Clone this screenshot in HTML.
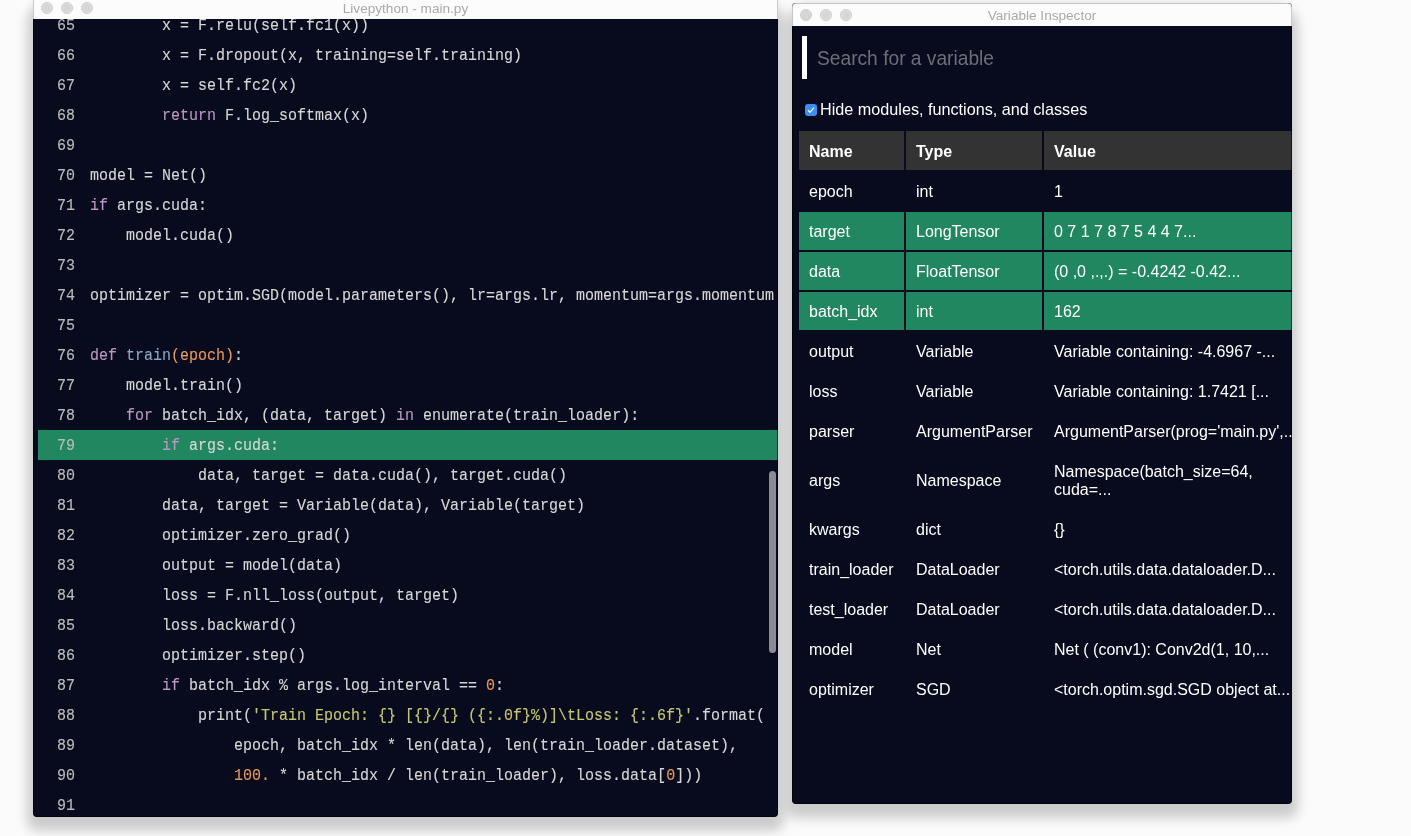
<!DOCTYPE html>
<html><head><meta charset="utf-8">
<style>
*{margin:0;padding:0;box-sizing:border-box}
html,body{width:1411px;height:836px;overflow:hidden;background:#fafbfa;position:relative}
body{font-family:"Liberation Sans",sans-serif}
.win{position:absolute;border-radius:4px;overflow:hidden;background:#080a1e}
.shd{position:absolute;border-radius:16px 16px 4px 4px;box-shadow:0 8px 12px 6px rgba(0,0,0,0.19)}
#eds{left:33px;top:-1px;width:745px;height:818px;z-index:2}
#vis{left:792px;top:3px;width:500px;height:801px;z-index:1}
.win::after{content:"";position:absolute;left:0;top:0;right:0;bottom:0;border-radius:4px;box-shadow:inset 0 0 0 1px rgba(0,0,0,0.55);pointer-events:none;z-index:5}
.win .tb::after{content:"";position:absolute;left:0;top:0;right:0;bottom:0;border-radius:4px 4px 0 0;box-shadow:inset 0 1px 0 rgba(0,0,0,0.22),inset 1px 0 0 rgba(0,0,0,0.2),inset -1px 0 0 rgba(0,0,0,0.2);z-index:6}
.tb{z-index:7}
.tb{position:absolute;left:0;top:0;right:0;height:23px;background:#fbfcfb;border-bottom:0}
.tl{position:absolute;top:6px;width:12px;height:12px;border-radius:50%;background:#d6d6d6;border:1px solid #cfcfcf}
.tl.r{box-shadow:inset 0 0 0 1px #e3e3e3}
.title{position:absolute;left:0;right:0;top:1px;height:23px;line-height:23px;text-align:center;font-size:13.6px;color:#a9a9a9}
#ed{left:33px;top:-4px;width:745px;height:821px;z-index:2}
#vi{left:792px;top:3px;width:500px;height:801px;z-index:1}
.code{position:absolute;left:0;top:14px;width:745px;font-family:"Liberation Mono",monospace;font-size:15px;color:#d6d6d6;-webkit-text-stroke:0.12px currentColor}
.ln .n,.ln .c{display:inline-block;height:30px;transform:translateY(1.5px) scaleY(1.14);transform-origin:0 15px}
.ln{position:relative;height:30px;line-height:30px;white-space:pre}
.ln.hl{background:#218760;margin-left:5px}
.ln .n{position:absolute;left:0;width:42px;text-align:right;color:#bcbcbc}
.ln.hl .n{left:-5px}
.ln .c{position:absolute;left:57px;overflow:hidden;width:684px}
.ln.hl .c{left:52px}
.k{color:#bb97c2}.f{color:#88a9c4}.o{color:#e6975b}.s{color:#c6c670}
.win>*{will-change:transform}
.sb{position:absolute;left:736px;top:475px;width:7px;height:182px;border-radius:4px;background:#8a8b95}
.search{position:absolute;left:10px;top:33px;width:5px;height:43px;background:#fff}
.ph{position:absolute;left:25px;top:43px;font-size:19.2px;color:#6d6e78;line-height:24px;transform:scaleY(1.1);transform-origin:0 8px}
.chk{position:absolute;left:13px;top:101px;width:12px;height:12px;border-radius:3px;background:#3a8ef6}
.chk svg{position:absolute;left:0;top:0}
.hide{position:absolute;left:28px;top:96px;font-size:16.2px;color:#fff;line-height:20px}
table{position:absolute;left:5px;top:126px;border-collapse:separate;border-spacing:2px;color:#fff;font-size:16px;width:700px;table-layout:fixed}
td,th{padding:11px 10px 9px;line-height:18px;text-align:left;white-space:nowrap}
th{background:#333;font-weight:bold;padding:12px 10px 9px}
tr.g td{background:#218760}
</style></head><body>
<div class="shd" id="eds"></div>
<div class="win" id="ed">
 <div class="code">
  <div class="ln"><span class="n">65</span><span class="c">        x = F.relu(self.fc1(x))</span></div>
  <div class="ln"><span class="n">66</span><span class="c">        x = F.dropout(x, training=self.training)</span></div>
  <div class="ln"><span class="n">67</span><span class="c">        x = self.fc2(x)</span></div>
  <div class="ln"><span class="n">68</span><span class="c">        <span class="k">return</span> F.log_softmax(x)</span></div>
  <div class="ln"><span class="n">69</span><span class="c"></span></div>
  <div class="ln"><span class="n">70</span><span class="c">model = Net()</span></div>
  <div class="ln"><span class="n">71</span><span class="c"><span class="k">if</span> args.cuda:</span></div>
  <div class="ln"><span class="n">72</span><span class="c">    model.cuda()</span></div>
  <div class="ln"><span class="n">73</span><span class="c"></span></div>
  <div class="ln"><span class="n">74</span><span class="c">optimizer = optim.SGD(model.parameters(), lr=args.lr, momentum=args.momentum)</span></div>
  <div class="ln"><span class="n">75</span><span class="c"></span></div>
  <div class="ln"><span class="n">76</span><span class="c"><span class="k">def</span> <span class="f">train</span><span class="o">(epoch)</span>:</span></div>
  <div class="ln"><span class="n">77</span><span class="c">    model.train()</span></div>
  <div class="ln"><span class="n">78</span><span class="c">    <span class="k">for</span> batch_idx, (data, target) <span class="k">in</span> enumerate(train_loader):</span></div>
  <div class="ln hl"><span class="n">79</span><span class="c">        <span class="k">if</span> args.cuda:</span></div>
  <div class="ln"><span class="n">80</span><span class="c">            data, target = data.cuda(), target.cuda()</span></div>
  <div class="ln"><span class="n">81</span><span class="c">        data, target = Variable(data), Variable(target)</span></div>
  <div class="ln"><span class="n">82</span><span class="c">        optimizer.zero_grad()</span></div>
  <div class="ln"><span class="n">83</span><span class="c">        output = model(data)</span></div>
  <div class="ln"><span class="n">84</span><span class="c">        loss = F.nll_loss(output, target)</span></div>
  <div class="ln"><span class="n">85</span><span class="c">        loss.backward()</span></div>
  <div class="ln"><span class="n">86</span><span class="c">        optimizer.step()</span></div>
  <div class="ln"><span class="n">87</span><span class="c">        <span class="k">if</span> batch_idx % args.log_interval == <span class="o">0</span>:</span></div>
  <div class="ln"><span class="n">88</span><span class="c">            print(<span class="s">'Train Epoch: {} [{}/{} ({:.0f}%)]\tLoss: {:.6f}'</span>.format(</span></div>
  <div class="ln"><span class="n">89</span><span class="c">                epoch, batch_idx * len(data), len(train_loader.dataset),</span></div>
  <div class="ln"><span class="n">90</span><span class="c">                <span class="o">100.</span> * batch_idx / len(train_loader), loss.data[<span class="o">0</span>]))</span></div>
  <div class="ln"><span class="n">91</span><span class="c"></span></div>
 </div>
 <div class="sb"></div>
 <div class="tb"><div class="tl r" style="left:8px"></div><div class="tl r" style="left:28px"></div><div class="tl r" style="left:48px"></div><div class="title">Livepython - main.py</div></div>
</div>

<div class="shd" id="vis"></div>
<div class="win" id="vi">
 <div class="search"></div>
 <div class="ph">Search for a variable</div>
 <div class="chk"><svg width="12" height="12" viewBox="0 0 12 12"><path d="M3 6.2 L5 8.3 L9 3.6" fill="none" stroke="#fff" stroke-width="1.3"/></svg></div>
 <div class="hide">Hide modules, functions, and classes</div>
 <table>
  <tr><th style="width:105px">Name</th><th style="width:136px">Type</th><th>Value</th></tr>
  <tr><td>epoch</td><td>int</td><td>1</td></tr>
  <tr class="g"><td>target</td><td>LongTensor</td><td>0 7 1 7 8 7 5 4 4 7...</td></tr>
  <tr class="g"><td>data</td><td>FloatTensor</td><td>(0 ,0 ,.,.) = -0.4242 -0.42...</td></tr>
  <tr class="g"><td>batch_idx</td><td>int</td><td>162</td></tr>
  <tr><td>output</td><td>Variable</td><td>Variable containing: -4.6967 -...</td></tr>
  <tr><td>loss</td><td>Variable</td><td>Variable containing: 1.7421 [...</td></tr>
  <tr><td>parser</td><td>ArgumentParser</td><td>ArgumentParser(prog='main.py',...</td></tr>
  <tr><td>args</td><td>Namespace</td><td>Namespace(batch_size=64,<br>cuda=...</td></tr>
  <tr><td>kwargs</td><td>dict</td><td>{}</td></tr>
  <tr><td>train_loader</td><td>DataLoader</td><td>&lt;torch.utils.data.dataloader.D...</td></tr>
  <tr><td>test_loader</td><td>DataLoader</td><td>&lt;torch.utils.data.dataloader.D...</td></tr>
  <tr><td>model</td><td>Net</td><td>Net ( (conv1): Conv2d(1, 10,...</td></tr>
  <tr><td>optimizer</td><td>SGD</td><td>&lt;torch.optim.sgd.SGD object at...</td></tr>
 </table>
 <div class="tb"><div class="tl" style="left:8px"></div><div class="tl r" style="left:28px"></div><div class="tl r" style="left:48px"></div><div class="title">Variable Inspector</div></div>
</div>
</body></html>
